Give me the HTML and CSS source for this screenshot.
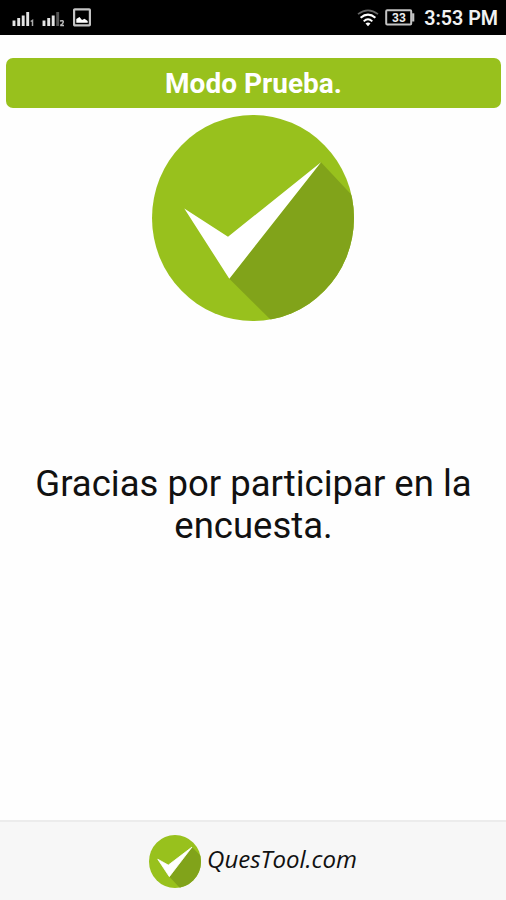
FILE: index.html
```
<!DOCTYPE html>
<html lang="es">
<head>
    <meta charset="UTF-8">
    <meta name="viewport" content="width=device-width, initial-scale=1.0">
    <title>QuesTool - Encuesta</title>
    <link rel="stylesheet" href="styles.css">
</head>
<body>
    <header class="status-bar">
        <div class="status-left">
            <svg class="icon-signal" width="23" height="18" viewBox="0 0 23 18">
                <path d="M2 11.5V17M6.7 9V17M11.2 6.5V17M15.7 3V17" stroke="#e4e4e4" stroke-width="2.9"/>
                <path d="M18.7 12.5L20.5 11.3V17" fill="none" stroke="#aaa" stroke-width="1.5"/>
            </svg>
            <svg class="icon-signal" width="23" height="18" viewBox="0 0 23 18">
                <path d="M2 11.5V17M6.7 9V17M11.2 6.5V17" stroke="#e4e4e4" stroke-width="2.9"/>
                <path d="M15.7 3V17" stroke="#555" stroke-width="2.9"/>
                <path d="M18 12Q21.5 11 21.3 13T18.3 16.4H22" fill="none" stroke="#bbb" stroke-width="1.5"/>
            </svg>
            <svg class="icon-image" width="18" height="19" viewBox="0 0 18 19">
                <rect x="1.1" y="1.4" width="15.8" height="16" rx="0.7" fill="none" stroke="#c4c4c4" stroke-width="2.2"/>
                <path d="M3.3 14.8V11L6.5 9L9 12L11.5 10.8L14.7 13V14.8Z" fill="#fff"/>
            </svg>
        </div>
        <div class="status-right">
            <svg class="icon-wifi" width="22" height="18" viewBox="0 0 22 18">
                <path d="M1 5.2Q11 -2.5 21 5.2" fill="none" stroke="#666" stroke-width="1.7"/>
                <path d="M3.6 8.8Q11 2.5 18.4 8.8M6.7 12.4Q11 8.2 15.3 12.4" fill="none" stroke="#fff" stroke-width="2"/>
                <path d="M8.5 14.6Q11 12.6 13.5 14.6L11 17.3Z" fill="#fff"/>
            </svg>
            <svg class="icon-battery" width="30" height="17" viewBox="0 0 30 17">
                <rect x="1.2" y="1.2" width="25" height="14.3" rx="1" fill="none" stroke="#c4c4c4" stroke-width="2"/>
                <path d="M28.2 4.3V12.5" stroke="#c4c4c4" stroke-width="2.2"/>
                <text class="battery-level" x="14" y="12.9" text-anchor="middle">33</text>
            </svg>
            <span class="clock">3:53 PM</span>
        </div>
    </header>

    <main class="content">
        <div class="banner">Modo Prueba.</div>
        <svg class="check" viewBox="0 0 202 206" preserveAspectRatio="none">
            <defs>
                <clipPath id="circle">
                    <ellipse cx="101" cy="103" rx="101" ry="103"/>
                </clipPath>
                <g id="check-logo">
                    <ellipse cx="101" cy="103" rx="101" ry="103" fill="#98c11d"/>
                    <path d="M77.3 163.7L169 47.3L209 90V213H127Z" fill="#81a31a" clip-path="url(#circle)"/>
                    <path d="M32.3 93.5L76 121.7L169 47.3L77.3 163.7Z" fill="#fff"/>
                </g>
            </defs>
            <use href="#check-logo"/>
        </svg>
        <p class="message">Gracias por participar en la encuesta.</p>
    </main>

    <footer class="footer">
        <svg class="footer-logo" viewBox="0 0 202 206" preserveAspectRatio="none">
            <ellipse cx="101" cy="103" rx="101" ry="103" fill="#98c11d"/>
            <path d="M79 162L167 47L209 90V213H127Z" fill="#81a31a" clip-path="url(#circle)"/>
            <path d="M34 94L75 117L167 47L79 162Z" fill="#fff" stroke="#fff" stroke-width="3"/>
        </svg>
        <span class="brand">QuesTool.com</span>
    </footer>
</body>
</html>
```
FILE: styles.css
```
* {
    box-sizing: border-box;
}
body {
    margin: 0;
    height: 100vh;
    display: flex;
    flex-direction: column;
    background: #fefefe;
    color: #111;
    font-family: Roboto, "Liberation Sans", sans-serif;
}
svg {
    display: block;
    flex-shrink: 0;
}
.status-bar {
    height: 35px;
    padding: 0 8px 0 12px;
    display: flex;
    justify-content: space-between;
    align-items: center;
    background: #000;
    color: #f2f2f2;
}
.status-left {
    display: flex;
    align-items: center;
    gap: 7px;
}
.icon-image {
    margin-left: 1px;
}
.status-right {
    display: flex;
    align-items: center;
}
.icon-battery {
    margin: 0 9px 0 6px;
}
.battery-level {
    font-size: 12px;
    font-weight: bold;
    fill: #eee;
}
.clock {
    padding-top: 3px;
    font-size: 19.7px;
    font-weight: 600;
    line-height: 24px;
    white-space: nowrap;
}
.content {
    flex: 1;
    padding: 23px 5px 0 6px;
    display: flex;
    flex-direction: column;
    align-items: center;
}
.banner {
    width: 100%;
    height: 50px;
    border-radius: 7px;
    background: #98c11d;
    color: #fff;
    font-size: 28px;
    font-weight: bold;
    line-height: 51px;
    text-align: center;
}
.check {
    width: 202px;
    height: 206px;
    margin: 7px 2px 0 0;
}
.message {
    width: 460px;
    margin: 142px 0 0;
    font-size: 36.5px;
    line-height: 42px;
    text-align: center;
}
.footer {
    height: 80px;
    display: flex;
    justify-content: center;
    align-items: center;
    gap: 6px;
    background: #f7f7f7;
    border-top: 2px solid #ececec;
}
.footer-logo {
    width: 52px;
    height: 53px;
}
.brand {
    padding-bottom: 4px;
    font-family: "Open Sans", "Noto Sans", sans-serif;
    font-size: 24px;
    font-style: italic;
    line-height: 30px;
}
```
